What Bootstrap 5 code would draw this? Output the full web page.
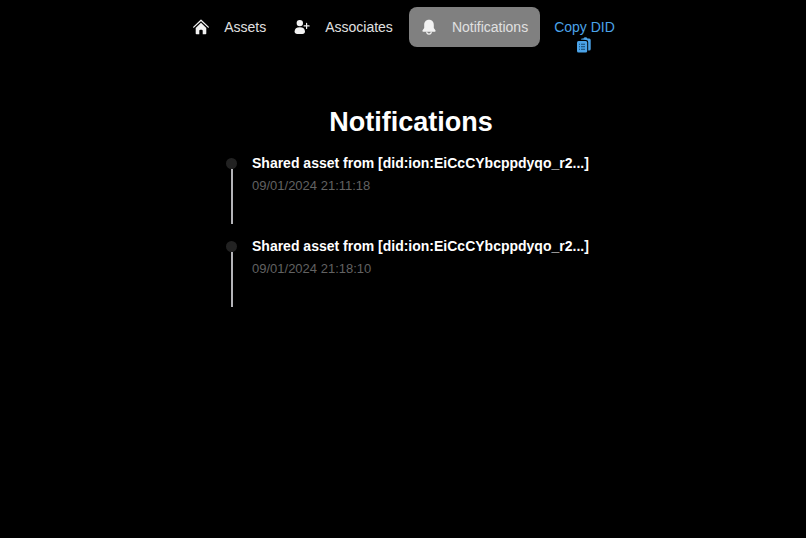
<!DOCTYPE html>
<html lang="en">
<head>
<meta charset="utf-8">
<meta name="viewport" content="width=device-width, initial-scale=1">
<title>Notifications</title>
<link href="https://cdn.jsdelivr.net/npm/bootstrap@5.3.0/dist/css/bootstrap.min.css" rel="stylesheet">
<style>
body { background: #000; color: #fff; font-family: "Liberation Sans", Arial, sans-serif; }
.top-nav { gap: 4px; padding-top: 7px; font-size: 14px; line-height: 20px; }
.top-nav .nav-link { display: flex; gap: 15px; padding: 10px 12px; color: #e0e0e0; border-radius: 8px; }
.top-nav .nav-link svg { width: 16px; height: 16px; margin-top: 2px; color: #f2f2f2; }
.top-nav .nav-link.active { background: #808080; }
.copy-did { color: #4ba3e8; padding: 10px 10px 0; font: inherit; line-height: 20px; }
.copy-did svg { width: 16px; height: 16px; }
.page-body { padding: 0 12px 0 28px; }
.page-title { font-size: 27px; line-height: 32px; font-weight: 700; margin: 53px 0 15px; }
.timeline { width: fit-content; gap: 12px; }
.entry { gap: 15px; min-height: 71px; }
.entry-body { min-width: 344px; }
.rail { width: 11px; padding-top: 5px; }
.dot { width: 11px; height: 11px; background: #222; }
.line { width: 2px; background: #b4b4b8; }
.entry-title { font-size: 14px; line-height: 20px; font-weight: 700; }
.entry time { font-size: 13px; line-height: 16px; margin-top: 5px; color: #626262; }
</style>
<script src="https://cdn.jsdelivr.net/npm/bootstrap@5.3.0/dist/js/bootstrap.bundle.min.js"></script>
</head>
<body>
<nav class="top-nav d-flex justify-content-center align-items-start" aria-label="Main">
  <a class="nav-link" href="#assets">
    <svg viewBox="0 0 16 16" fill="currentColor" aria-hidden="true"><path d="M8 3.8 2.7 8.9v5.6q0 .8.8.8h2.8v-3.5q0-1 1-1h1.4q1 0 1 1v3.5h2.8q.8 0 .8-.8V8.9z"/><path d="M.7 8.1 8 1.2l7.3 6.9" fill="none" stroke="currentColor" stroke-width="1.3" stroke-linecap="round" stroke-linejoin="round"/></svg>
    <span>Assets</span></a>
  <a class="nav-link" href="#associates">
    <svg viewBox="0 0 16 16" fill="currentColor" aria-hidden="true"><circle cx="5.8" cy="4.1" r="3.2"/><path d="M.6 12.6C.6 9.8 2.5 8.3 5.8 8.3s5.2 1.5 5.2 4.3c0 1.6-1 2.4-2.6 2.4H3.2C1.6 15 .6 14.2.6 12.6z"/><path d="M12.6 4.4v5M10.1 6.9h5" stroke="currentColor" stroke-width="1.2" stroke-linecap="round"/></svg>
    <span>Associates</span></a>
  <a class="nav-link active" href="#notifications" aria-current="page">
    <svg viewBox="0 0 16 16" fill="currentColor" aria-hidden="true"><path d="M8 .8C4.9.8 3.2 3 3.2 6v3L1.6 11.3c-.5.8 0 1.5.8 1.5h11.2c.8 0 1.3-.7.8-1.5L12.8 9V6C12.8 3 11.1.8 8 .8z"/><path d="M5.7 12.8a2.3 2.3 0 0 0 4.6 0" fill="none" stroke="currentColor" stroke-width="1.1"/></svg>
    <span>Notifications</span></a>
  <button type="button" class="copy-did border-0 bg-transparent d-flex flex-column align-items-center">
    <span>Copy DID</span>
    <svg viewBox="0 0 16 16" fill="currentColor" aria-hidden="true"><path d="M4.8 2.6q.3-1 1.4-1h1.2a2.1 2.1 0 0 1 4 0h1.8q1.5 0 1.5 1.5v8.8q0 1.5-1.5 1.5h-1V5.2q0-2.2-2.2-2.2z"/><rect x="1" y="4" width="10.2" height="11.6" rx="1.5"/><path d="M3 7.2h1m1 0h4M3 9.7h1m1 0h4M3 12.2h1m1 0h4" stroke="#16486e" stroke-width="1.1"/></svg>
  </button>
</nav>
<main class="page-body">
  <h1 class="page-title text-center">Notifications</h1>
  <ol class="timeline list-unstyled d-flex flex-column mx-auto mb-0">
    <li class="entry d-flex">
      <div class="rail d-flex flex-column align-items-center"><span class="dot rounded-circle"></span><span class="line flex-grow-1"></span></div>
      <div class="entry-body d-flex flex-column"><span class="entry-title">Shared asset from [did:ion:EiCcCYbcppdyqo_r2...]</span><time datetime="2024-01-09T21:11:18">09/01/2024 21:11:18</time></div>
    </li>
    <li class="entry d-flex">
      <div class="rail d-flex flex-column align-items-center"><span class="dot rounded-circle"></span><span class="line flex-grow-1"></span></div>
      <div class="entry-body d-flex flex-column"><span class="entry-title">Shared asset from [did:ion:EiCcCYbcppdyqo_r2...]</span><time datetime="2024-01-09T21:18:10">09/01/2024 21:18:10</time></div>
    </li>
  </ol>
</main>
</body>
</html>
